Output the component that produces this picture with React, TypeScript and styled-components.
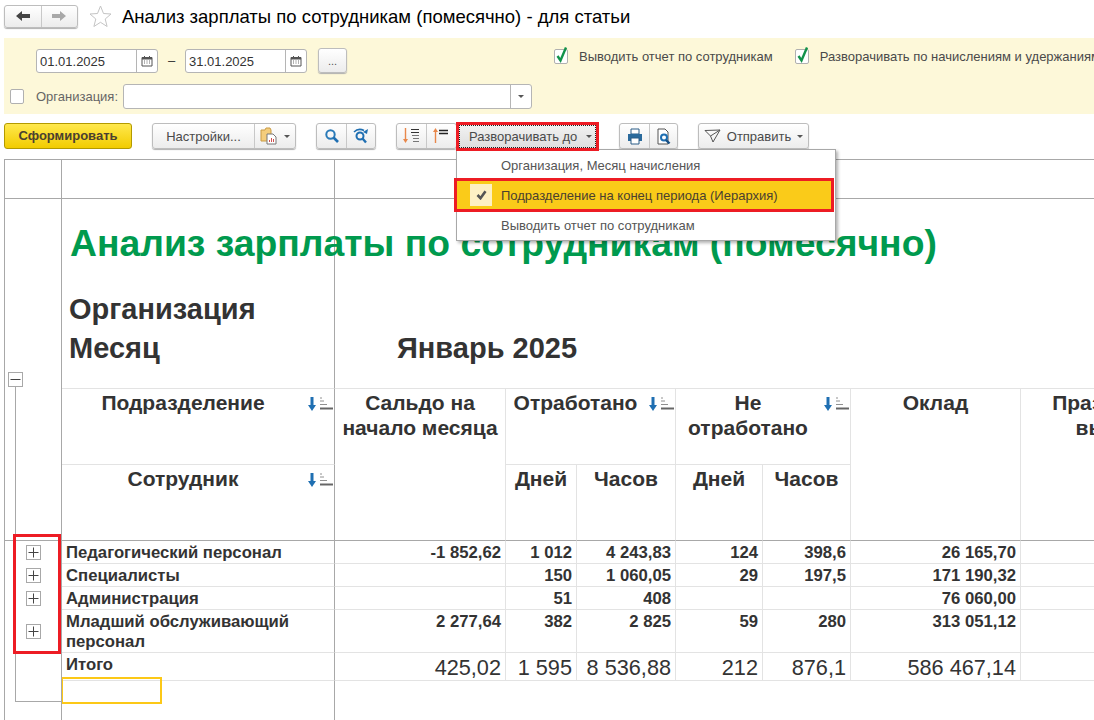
import React from 'react';
import styled, { createGlobalStyle, css } from 'styled-components';

const GlobalStyle = createGlobalStyle`
  html, body {
    margin: 0;
    padding: 0;
    background: #ffffff;
    overflow: hidden;
  }
  body {
    font-family: "Liberation Sans", Arial, sans-serif;
    color: #333333;
  }
  * {
    box-sizing: border-box;
  }
`;

const Page = styled.div`
  width: 1094px;
  height: 720px;
  position: relative;
  overflow: hidden;
  display: flex;
  flex-direction: column;
`;

/* header */

const TitleBar = styled.div`
  display: flex;
  align-items: center;
  height: 38px;
  padding: 0 0 6px 4px;
`;

const NavGroup = styled.div`
  display: flex;
  width: 74px;
  height: 23px;
  border: 1px solid #bdbdbd;
  border-radius: 3px;
  background: linear-gradient(#ffffff, #ececec);
  box-shadow: 0 1px 1px #b0b0b0;
`;

const NavButton = styled.div<{ $divided?: boolean }>`
  flex: 1;
  display: flex;
  align-items: center;
  justify-content: center;
  ${p => p.$divided && css`border-right: 1px solid #c8c8c8;`}
`;

const StarWrap = styled.div`
  display: flex;
  margin: 0 10px 0 11px;
`;

const Title = styled.div`
  font-size: 18.5px;
  padding-top: 1px;
  color: #000000;
  white-space: nowrap;
`;

/* filter panel */

const FilterPanel = styled.div`
  margin-left: 4px;
  height: 76px;
  background: #fdf8d9;
  display: flex;
  flex-direction: column;
`;

const FilterTop = styled.div`
  display: flex;
  align-items: flex-start;
  padding: 10px 0 0 32px;
  height: 46px;
  white-space: nowrap;
`;

const DateField = styled.div`
  display: flex;
  flex: none;
  width: 122px;
  height: 24px;
  margin-top: 1px;
  background: #ffffff;
  border: 1px solid #b5b5b5;
  border-radius: 3px;
  font-size: 13px;
  color: #333333;
`;

const DateText = styled.div`
  flex: 1;
  padding-left: 3px;
  line-height: 23px;
`;

const DateBtn = styled.div`
  width: 21px;
  border-left: 1px solid #b5b5b5;
  display: flex;
  align-items: center;
  justify-content: center;
`;

const Dash = styled.div`
  flex: none;
  width: 27px;
  text-align: center;
  font-size: 13px;
  line-height: 26px;
`;

const DotsButton = styled.div`
  flex: none;
  width: 29px;
  height: 25px;
  margin-left: 11px;
  border: 1px solid #bdbdbd;
  border-radius: 3px;
  background: linear-gradient(#ffffff, #ececec);
  box-shadow: 0 1px 1px #b0b0b0;
  font-size: 11px;
  text-align: center;
  line-height: 25px;
  color: #555555;
`;

const CheckGroup = styled.div<{ $first?: boolean }>`
  display: flex;
  flex: none;
  align-items: center;
  margin-left: ${p => (p.$first ? '207px' : '22px')};
  font-size: 13px;
  color: #4a4a4a;
  gap: 11px;
  height: 15px;
  margin-top: 1px;
`;

const CheckBox = styled.div`
  width: 14px;
  height: 15px;
  flex: none;
  background: #ffffff;
  border: 1px solid #b0b0b0;
  border-radius: 2px;
  position: relative;
`;

const CheckMark = styled.svg`
  position: absolute;
  left: 0;
  top: -4px;
`;

const FilterBottom = styled.div`
  display: flex;
  align-items: center;
  padding-left: 6px;
  height: 25px;
  font-size: 13px;
  color: #666666;
`;

const OrgLabel = styled.div`
  margin: 0 5px 0 12px;
  white-space: nowrap;
`;

const OrgInput = styled.div`
  width: 409px;
  height: 25px;
  background: #ffffff;
  border: 1px solid #b5b5b5;
  border-radius: 3px;
  display: flex;
  justify-content: flex-end;
`;

const OrgDrop = styled.div`
  width: 21px;
  border-left: 1px solid #b5b5b5;
  display: flex;
  align-items: center;
  justify-content: center;
`;

const Caret = styled.span`
  display: inline-block;
  width: 0;
  height: 0;
  border-left: 3px solid transparent;
  border-right: 3px solid transparent;
  border-top: 3px solid #555555;
`;

/* toolbar */

const Toolbar = styled.div`
  display: flex;
  align-items: flex-start;
  height: 45px;
  padding: 9px 0 0 4px;
`;

const PrimaryButton = styled.div`
  width: 128px;
  height: 26px;
  border: 1px solid #b39a00;
  border-radius: 3px;
  background: linear-gradient(#ffe84d, #f2cc00);
  font-size: 13px;
  font-weight: bold;
  color: #4a4030;
  text-align: center;
  line-height: 24px;
`;

const ToolGroup = styled.div<{ $left: number; $width: number }>`
  display: flex;
  flex: none;
  margin-left: ${p => p.$left}px;
  width: ${p => p.$width}px;
  height: 26px;
  border: 1px solid #bdbdbd;
  border-radius: 3px;
  background: linear-gradient(#ffffff, #ececec);
  box-shadow: 0 1px 1px #b0b0b0;
  font-size: 13px;
  color: #4a4a4a;
`;

const ToolCell = styled.div<{ $grow?: boolean; $divided?: boolean; $width?: number }>`
  display: flex;
  align-items: center;
  justify-content: center;
  gap: 6px;
  white-space: nowrap;
  ${p => p.$grow && css`flex: 1;`}
  ${p => p.$width && css`width: ${p.$width}px;`}
  ${p => p.$divided && css`border-right: 1px solid #c8c8c8;`}
`;

const ExpandButton = styled.div`
  width: 143px;
  height: 29px;
  margin-top: -1px;
  margin-left: -1px;
  flex: none;
  border: 3px solid #ed1c24;
  background: linear-gradient(#f2f2f2, #dedede);
  font-size: 13px;
  color: #4a4a4a;
  display: flex;
  align-items: center;
  padding-left: 10px;
  gap: 9px;
  outline: 1px dotted #222222;
  outline-offset: -4px;
  position: relative;
  z-index: 3;
  white-space: nowrap;
`;

/* dropdown */

const Menu = styled.div`
  position: absolute;
  left: 456px;
  top: 149px;
  width: 380px;
  height: 92px;
  background: #ffffff;
  border: 1px solid #a8a8a8;
  box-shadow: 2px 2px 3px rgba(0, 0, 0, 0.3);
  z-index: 2;
  display: flex;
  flex-direction: column;
  font-size: 13px;
  color: #555555;
`;

const MenuItem = styled.div<{ $active?: boolean; $shiftTop?: number; $shiftBottom?: number }>`
  height: 28px;
  flex: 1;
  display: flex;
  align-items: center;
  padding: ${p => p.$shiftTop || 0}px 0 ${p => p.$shiftBottom || 0}px 44px;
  white-space: nowrap;
  position: relative;
  ${p => p.$active && css`
    flex: none;
    height: 34px;
    margin-left: -3px;
    width: 380px;
    background: #facb19;
    border: 3px solid #ed1c24;
    color: #4a4030;
    padding-left: 44px;
  `}
`;

const MenuCheck = styled.div`
  position: absolute;
  left: 13px;
  top: 3px;
  width: 22px;
  height: 22px;
  background: #fdf0c4;
  display: flex;
  align-items: center;
  justify-content: center;
`;

/* spreadsheet */

const Sheet = styled.div`
  flex: 1;
  position: relative;
  margin-left: 4px;
  border-top: 1px solid #a8a8a8;
  display: grid;
  grid-template-columns: 58px 273px 171px 71px 99px 87px 88px 170px 207px;
  grid-template-rows: 39px 93px 39px 57px 77px 76px 23px 23px 23px 43px 28px 1fr;
  color: #333333;
  overflow: hidden;
`;

const Gutter = styled.div<{ $row: string; $line?: boolean }>`
  grid-column: 1;
  grid-row: ${p => p.$row};
  border-left: 1px solid #a8a8a8;
  border-right: 1px solid #a8a8a8;
  ${p => p.$line && css`border-bottom: 1px solid #a8a8a8;`}
  display: flex;
  align-items: center;
  padding-left: 21px;
`;

const TopCell = styled.div`
  grid-column: 2;
  grid-row: 1;
  border-right: 1px solid #a8a8a8;
  border-bottom: 1px solid #a8a8a8;
`;

const TopRest = styled.div`
  grid-column: 3 / -1;
  grid-row: 1;
  border-bottom: 1px solid #a8a8a8;
`;

const TitleCell = styled.div`
  grid-column: 2;
  grid-row: 2;
  border-right: 1px solid #a8a8a8;
  padding: 21px 0 0 8px;
  font-size: 37.3px;
  line-height: 46px;
  font-weight: bold;
  color: #009a4e;
  white-space: nowrap;
`;

const BigLabel = styled.div<{ $row: number }>`
  grid-column: 2;
  grid-row: ${p => p.$row};
  border-right: 1px solid #a8a8a8;
  padding-left: 7px;
  font-size: 29px;
  line-height: 34px;
  font-weight: bold;
  white-space: nowrap;
`;

const MonthLabel = styled.div`
  grid-column: 3 / 7;
  grid-row: 4;
  padding-left: 62px;
  font-size: 29px;
  line-height: 34px;
  font-weight: bold;
  white-space: nowrap;
`;

const HeadCell = styled.div<{ $col: string; $row: string; $sort?: boolean; $first?: boolean }>`
  grid-column: ${p => p.$col};
  grid-row: ${p => p.$row};
  position: relative;
  border-top: ${p => (p.$row.startsWith('5') ? '1px solid #e3e3e3' : 'none')};
  border-bottom: 1px solid ${p => (p.$row === '5' ? '#e3e3e3' : '#a8a8a8')};
  border-right: 1px solid ${p => (p.$first ? '#a8a8a8' : '#e3e3e3')};
  padding: 1px ${p => (p.$sort ? '32px' : '2px')} 0 2px;
  font-size: 21px;
  line-height: 25px;
  font-weight: bold;
  text-align: center;
`;

const SortIcon = styled.svg`
  position: absolute;
  right: 1px;
  top: 7px;
`;

const BodyCell = styled.div<{ $col: number; $row: number; $first?: boolean; $total?: boolean }>`
  grid-column: ${p => p.$col};
  grid-row: ${p => p.$row};
  border-right: 1px solid ${p => (p.$first ? '#a8a8a8' : '#e3e3e3')};
  border-bottom: 1px solid #e3e3e3;
  padding: 2px 4px 0;
  font-size: ${p => (p.$total ? '21.7px' : '16.7px')};
  font-weight: ${p => (p.$total ? 'normal' : 'bold')};
  line-height: ${p => (p.$total ? '25px' : '20px')};
  text-align: ${p => (p.$first ? 'left' : 'right')};
  white-space: ${p => (p.$first ? 'normal' : 'nowrap')};
`;

const FirstColFill = styled.div`
  grid-column: 2;
  grid-row: 12;
  border-right: 1px solid #a8a8a8;
  position: relative;
`;

const PickedCell = styled.div`
  position: absolute;
  left: 0;
  top: -4px;
  width: 100px;
  height: 27px;
  border: 2px solid #fcc817;
  border-left-width: 1px;
`;

const PlusBox = styled.div`
  width: 15px;
  height: 15px;
  background: #ffffff;
  border: 1px solid #a8a8a8;
  position: relative;
  z-index: 1;
  display: flex;
  align-items: center;
  justify-content: center;
`;

const MinusBox = styled(PlusBox)`
  position: absolute;
  left: 4px;
  top: 212px;
`;

const TreeLine = styled.div`
  position: absolute;
  left: 11px;
  top: 226px;
  width: 47px;
  height: 316px;
  border-left: 1px solid #a8a8a8;
  border-bottom: 1px solid #a8a8a8;
`;

const RedFrame = styled.div`
  position: absolute;
  left: 9px;
  top: 374px;
  width: 48px;
  height: 120px;
  border: 3px solid #ed1c24;
  z-index: 2;
`;

const SortGlyph = () => (
  <SortIcon width="26" height="16" viewBox="0 0 26 16">
    <path d="M5 1v10" stroke="#1f6fb2" strokeWidth="3" />
    <path d="M1 9h8l-4 6z" fill="#1f6fb2" />
    <path d="M13 2h2M13 5h4M13 8.500h7" stroke="#909090" strokeWidth="1" />
    <path d="M13 12.500h13" stroke="#666666" strokeWidth="2" />
  </SortIcon>
);

const PlusIcon = () => (
  <svg width="13" height="13" viewBox="0 0 13 13">
    <path d="M6.500 1.500v10M1.500 6.500h10" stroke="#444444" strokeWidth="1" />
  </svg>
);

const Calendar = () => (
  <svg width="12" height="12" viewBox="0 0 12 12">
    <path d="M1 2.500h10v8.500H1z" fill="#ffffff" stroke="#555555" />
    <path d="M1 2h10v2.500H1z" fill="#555555" />
    <path d="M3.500 1v2M8.500 1v2" stroke="#555555" />
    <path d="M3 6h1M5.500 6h1M8 6h1M3 8h1M5.500 8h1M8 8h1" stroke="#666666" />
  </svg>
);

const Tick = () => (
  <CheckMark width="15" height="18" viewBox="0 0 15 18">
    <path d="M2.500 10l3 4.500 5.500-13" fill="none" stroke="#12924a" strokeWidth="2.4" />
  </CheckMark>
);

const SortDownIcon = () => (
  <svg width="20" height="20" viewBox="0 0 20 20">
    <path d="M3.500 2v13" stroke="#e8874a" strokeWidth="1.4" />
    <path d="M1 13h5l-2.500 4z" fill="#e8874a" />
    <path d="M9 3.500h8M9 6.500h8" stroke="#333333" strokeWidth="1.2" />
    <path d="M10 9.500h7M11 12.500h6M11 15.500h6" stroke="#777777" strokeWidth="1.2" />
  </svg>
);

const SortUpIcon = () => (
  <svg width="20" height="20" viewBox="0 0 20 20">
    <path d="M3.500 5v12" stroke="#e8874a" strokeWidth="1.4" />
    <path d="M1 6h5L3.500 2z" fill="#e8874a" />
    <path d="M7 4.500h9M7 7.500h9" stroke="#222222" strokeWidth="1.4" />
  </svg>
);

const rows = [
  { name: 'Педагогический персонал', cells: ['-1 852,62', '1 012', '4 243,83', '124', '398,6', '26 165,70', ''] },
  { name: 'Специалисты', cells: ['', '150', '1 060,05', '29', '197,5', '171 190,32', ''] },
  { name: 'Администрация', cells: ['', '51', '408', '', '', '76 060,00', ''] },
  { name: 'Младший обслуживающий персонал', cells: ['2 277,64', '382', '2 825', '59', '280', '313 051,12', ''] },
];

const totals = ['425,02', '1 595', '8 536,88', '212', '876,1', '586 467,14', ''];

export default function App() {
  return (
    <Page>
      <GlobalStyle />
      <TitleBar>
        <NavGroup>
          <NavButton $divided>
            <svg width="16" height="12" viewBox="0 0 16 12">
              <path d="M1 6l6-5v3h8v4H7v3z" fill="#444444" />
            </svg>
          </NavButton>
          <NavButton>
            <svg width="16" height="12" viewBox="0 0 16 12">
              <path d="M15 6L9 1v3H1v4h8v3z" fill="#a8a8a8" />
            </svg>
          </NavButton>
        </NavGroup>
        <StarWrap>
          <svg width="23" height="22" viewBox="0 0 23 22">
            <path d="M11.500 1l3 7.500 7.500.5-5.800 5 1.900 7.500-6.600-4.200L4.900 21.500l1.900-7.500L1 9l7.500-.5z" fill="#ffffff" stroke="#c4c4c4" />
          </svg>
        </StarWrap>
        <Title>Анализ зарплаты по сотрудникам (помесячно) - для статьи</Title>
      </TitleBar>

      <FilterPanel>
        <FilterTop>
          <DateField>
            <DateText>01.01.2025</DateText>
            <DateBtn><Calendar /></DateBtn>
          </DateField>
          <Dash>–</Dash>
          <DateField>
            <DateText>31.01.2025</DateText>
            <DateBtn><Calendar /></DateBtn>
          </DateField>
          <DotsButton>...</DotsButton>
          <CheckGroup $first>
            <CheckBox><Tick /></CheckBox>
            Выводить отчет по сотрудникам
          </CheckGroup>
          <CheckGroup>
            <CheckBox><Tick /></CheckBox>
            Разворачивать по начислениям и удержаниям
          </CheckGroup>
        </FilterTop>
        <FilterBottom>
          <CheckBox />
          <OrgLabel>Организация:</OrgLabel>
          <OrgInput>
            <OrgDrop><Caret /></OrgDrop>
          </OrgInput>
        </FilterBottom>
      </FilterPanel>

      <Toolbar>
        <PrimaryButton>Сформировать</PrimaryButton>
        <ToolGroup $left={20} $width={144}>
          <ToolCell $width={102} $divided>Настройки...</ToolCell>
          <ToolCell $grow>
            <svg width="18" height="18" viewBox="0 0 18 18">
              <path d="M1 3h4l1-2h4l1 2v11H1z" fill="#f4cd7c" stroke="#c99b45" />
              <path d="M7 7h6l3 3v7H7z" fill="#ffffff" stroke="#777777" />
              <path d="M9.500 15v-2M11.500 15v-4M13.500 15v-3" stroke="#d05050" />
            </svg>
            <Caret />
          </ToolCell>
        </ToolGroup>
        <ToolGroup $left={20} $width={60}>
          <ToolCell $width={30} $divided>
            <svg width="14" height="14" viewBox="0 0 14 14">
              <circle cx="5.500" cy="5.500" r="4.200" fill="none" stroke="#2a7ab8" strokeWidth="2" />
              <path d="M8.500 8.500l4.500 4.500" stroke="#1f6fb2" strokeWidth="2.6" />
            </svg>
          </ToolCell>
          <ToolCell $grow>
            <svg width="16" height="16" viewBox="0 0 16 16">
              <circle cx="7" cy="8" r="3.500" fill="none" stroke="#1f6fb2" strokeWidth="2" />
              <path d="M9.500 10.500l3.500 4" stroke="#1f6fb2" strokeWidth="2.4" />
              <path d="M1 4c3-3 7-3 10-1.500" fill="none" stroke="#1f6fb2" strokeWidth="1.6" />
              <path d="M15 1l-1 5-4-2z" fill="#1f6fb2" />
            </svg>
          </ToolCell>
        </ToolGroup>
        <ToolGroup $left={20} $width={61}>
          <ToolCell $width={30} $divided><SortDownIcon /></ToolCell>
          <ToolCell $grow><SortUpIcon /></ToolCell>
        </ToolGroup>
        <ExpandButton>
          Разворачивать до <Caret />
        </ExpandButton>
        <ToolGroup $left={20} $width={59}>
          <ToolCell $width={30} $divided>
            <svg width="16" height="17" viewBox="0 0 16 17">
              <path d="M4 1h8v5H4z" fill="#ffffff" stroke="#2a5d87" />
              <path d="M1 6h14v7H1z" fill="#2a6a9c" />
              <path d="M4 10h8v6H4z" fill="#ffffff" stroke="#2a5d87" />
            </svg>
          </ToolCell>
          <ToolCell $grow>
            <svg width="16" height="17" viewBox="0 0 16 17">
              <path d="M2 1h7l3 3v12H2z" fill="#ffffff" stroke="#555555" />
              <circle cx="8" cy="9.500" r="3" fill="none" stroke="#1f6fb2" strokeWidth="2" />
              <path d="M10 12l3.500 3.500" stroke="#154f86" strokeWidth="2.4" />
            </svg>
          </ToolCell>
        </ToolGroup>
        <ToolGroup $left={20} $width={111}>
          <ToolCell $grow>
            <svg width="17" height="14" viewBox="0 0 17 14">
              <path d="M1 1.500L16 1 9 13 6.500 7z M6.500 7L16 1" fill="none" stroke="#555555" />
            </svg>
            Отправить
            <Caret />
          </ToolCell>
        </ToolGroup>
      </Toolbar>

      <Menu>
        <MenuItem $shiftTop={2}>Организация, Месяц начисления</MenuItem>
        <MenuItem $active>
          <MenuCheck>
            <svg width="11" height="10" viewBox="0 0 11 10">
              <path d="M1.500 5l3 3.200 5-7" fill="none" stroke="#555555" strokeWidth="2.6" />
            </svg>
          </MenuCheck>
          Подразделение на конец периода (Иерархия)
        </MenuItem>
        <MenuItem $shiftBottom={2}>Выводить отчет по сотрудникам</MenuItem>
      </Menu>

      <Sheet>
        <Gutter $row="1" $line />
        <TopCell />
        <TopRest />

        <Gutter $row="2 / 7" $line />
        <TitleCell>Анализ зарплаты по сотрудникам (помесячно)</TitleCell>
        <BigLabel $row={3}>Организация</BigLabel>
        <BigLabel $row={4}>Месяц</BigLabel>
        <MonthLabel>Январь 2025</MonthLabel>

        <HeadCell $col="2" $row="5" $sort $first>Подразделение<SortGlyph /></HeadCell>
        <HeadCell $col="3" $row="5 / 7">Сальдо на начало месяца</HeadCell>
        <HeadCell $col="4 / 6" $row="5" $sort>Отработано<SortGlyph /></HeadCell>
        <HeadCell $col="6 / 8" $row="5" $sort>Не отработано<SortGlyph /></HeadCell>
        <HeadCell $col="8" $row="5 / 7">Оклад</HeadCell>
        <HeadCell $col="9" $row="5 / 7">Праздничные выплаты</HeadCell>
        <HeadCell $col="2" $row="6" $sort $first>Сотрудник<SortGlyph /></HeadCell>
        <HeadCell $col="4" $row="6">Дней</HeadCell>
        <HeadCell $col="5" $row="6">Часов</HeadCell>
        <HeadCell $col="6" $row="6">Дней</HeadCell>
        <HeadCell $col="7" $row="6">Часов</HeadCell>

        {rows.map((row, i) => (
          <React.Fragment key={row.name}>
            <Gutter $row={String(7 + i)}>
              <PlusBox><PlusIcon /></PlusBox>
            </Gutter>
            <BodyCell $col={2} $row={7 + i} $first>{row.name}</BodyCell>
            {row.cells.map((value, j) => (
              <BodyCell key={j} $col={3 + j} $row={7 + i}>{value}</BodyCell>
            ))}
          </React.Fragment>
        ))}

        <Gutter $row="11 / 13" />
        <BodyCell $col={2} $row={11} $first>Итого</BodyCell>
        {totals.map((value, j) => (
          <BodyCell key={j} $col={3 + j} $row={11} $total>{value}</BodyCell>
        ))}
        <FirstColFill>
          <PickedCell />
        </FirstColFill>

        <TreeLine />
        <MinusBox>
          <svg width="13" height="13" viewBox="0 0 13 13">
            <path d="M1.500 6.500h10" stroke="#444444" strokeWidth="1" />
          </svg>
        </MinusBox>
        <RedFrame />
      </Sheet>
    </Page>
  );
}
